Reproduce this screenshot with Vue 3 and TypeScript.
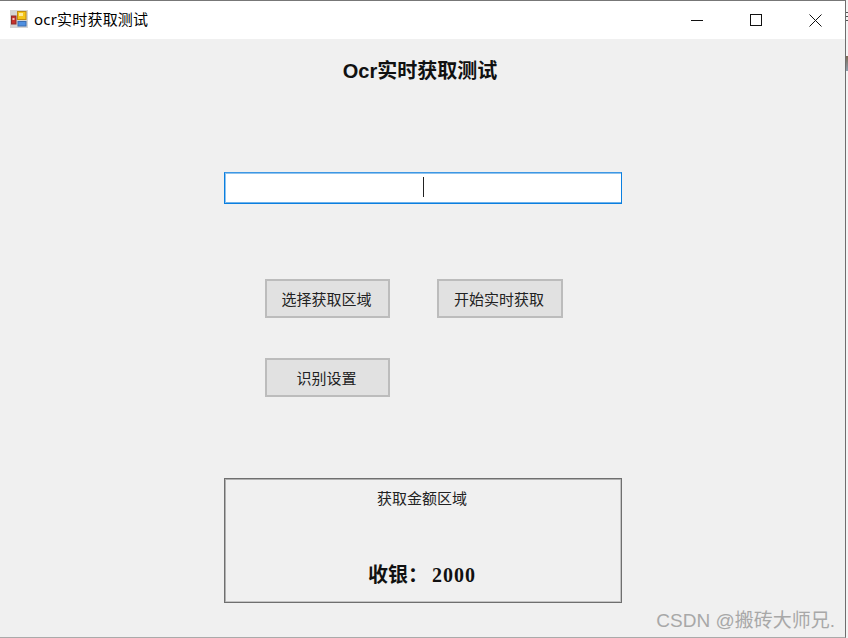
<template>
  <div class="desktop">
    <div class="window">
      <header class="titlebar">
        <svg class="app-icon" width="18" height="18" viewBox="0 0 18 18">
          <rect x="0" y="0" width="18" height="18" fill="#d4d4d4" />
          <rect x="7.5" y="1.5" width="8.5" height="8" fill="#f5c518" stroke="#c08a10" stroke-width="1" />
          <rect x="9" y="3" width="4" height="3" fill="#fdeb9a" />
          <rect x="1.5" y="6" width="4.5" height="8" fill="#c8322c" stroke="#8e2a28" stroke-width="1" />
          <rect x="2.5" y="8" width="2" height="2" fill="#f3c0b8" />
          <rect x="8" y="11.5" width="8" height="4.5" fill="#4f8fe0" stroke="#3a6cb0" stroke-width="1" />
        </svg>
        <span class="window-title">ocr实时获取测试</span>
        <div class="controls">
          <button class="control" aria-label="最小化">
            <svg width="12" height="12" viewBox="0 0 12 12"><path d="M0 6.5H12" stroke="#111" fill="none" /></svg>
          </button>
          <button class="control" aria-label="最大化">
            <svg width="12" height="12" viewBox="0 0 12 12"><rect x="0.5" y="0.5" width="11" height="11" stroke="#111" fill="none" /></svg>
          </button>
          <button class="control" aria-label="关闭">
            <svg width="13" height="13" viewBox="0 0 13 13"><path d="M0.5 0.5L12.5 12.5M12.5 0.5L0.5 12.5" stroke="#111" fill="none" /></svg>
          </button>
        </div>
      </header>

      <main class="form">
        <h1 class="heading">Ocr实时获取测试</h1>

        <div class="ocr-input">
          <span class="caret"></span>
        </div>

        <div class="actions">
          <button v-for="a in actions" :key="a" class="btn">{{ a }}</button>
        </div>

        <section class="result">
          <div class="result-title">获取金额区域</div>
          <div class="result-value">收银：<span class="amount">2000</span></div>
        </section>

        <div class="watermark">CSDN @搬砖大师兄.</div>
      </main>
    </div>
    <div class="edge"></div>
  </div>
</template>

<script setup lang="ts">
const actions: string[] = ["选择获取区域", "开始实时获取", "识别设置"];
</script>

<style>
html,
body {
  margin: 0;
  background: #fff;
}
</style>

<style scoped>
.desktop {
  width: 848px;
  height: 638px;
  display: flex;
  overflow: hidden;
}

.edge {
  flex: 1;
  background:
    linear-gradient(#555, #555) 0 12px / 100% 1px no-repeat,
    linear-gradient(#555, #555) 0 16px / 100% 1px no-repeat,
    linear-gradient(#555, #555) 0 20px / 100% 1px no-repeat,
    linear-gradient(#7b6a55, #8fa0b0) 0 56px / 100% 15px no-repeat,
    #f4f4f4;
}

.window {
  width: 846px;
  height: 638px;
  flex: none;
  box-sizing: border-box;
  border-right: 1px solid #6e6e6e;
  border-bottom: 1px solid #aaa;
  border-top: 1px solid #777;
  display: flex;
  flex-direction: column;
  font-family: "Noto Sans CJK SC", "Liberation Sans", sans-serif;
  color: #111;
}

.titlebar {
  height: 38px;
  flex: none;
  background: #fff;
  display: flex;
  align-items: center;
  padding-left: 10px;
}

.app-icon {
  margin-right: 6px;
  margin-top: -2px;
}

.window-title {
  font-size: 15px;
  line-height: 20px;
  margin-top: -2px;
  letter-spacing: 0.2px;
  color: #000;
  font-family: "Noto Sans", "Noto Sans CJK SC", sans-serif;
}

.controls {
  margin-left: auto;
  display: flex;
  height: 100%;
}

.control {
  width: 59px;
  border: 0;
  background: transparent;
  padding: 0;
  display: flex;
  align-items: center;
  justify-content: center;
}

.control:not(:last-child) svg {
  margin-right: 2px;
}

.form {
  position: relative;
  flex: 1;
  background: #f0f0f0;
  padding-left: 224px;
}

.heading {
  width: 392px;
  margin: 0;
  padding-top: 18px;
  height: 29px;
  font-size: 20px;
  line-height: 29px;
  font-weight: 700;
  text-align: center;
  font-family: "Liberation Sans", "Noto Sans CJK SC", sans-serif;
}

.ocr-input {
  width: 398px;
  height: 32px;
  box-sizing: border-box;
  margin-top: 86px;
  background: #fff;
  border: 1px solid #0a7fe0;
  border-top-color: #3d97e4;
  box-shadow: inset 1px 1px 0 #8fc3ee, inset 0 -1px 0 #6fb2ea;
  display: flex;
  align-items: center;
  padding-left: 198px;
}

.caret {
  width: 1px;
  height: 20px;
  margin-top: -3px;
  background: #222;
}

.actions {
  width: 298px;
  margin: 75px 0 0 41px;
  display: grid;
  grid-template-columns: 125px 126px;
  column-gap: 47px;
  row-gap: 40px;
}

.btn {
  height: 39px;
  box-sizing: border-box;
  padding: 0 2px 0 0;
  background: #e1e1e1;
  border: 2px solid #bcbcbc;
  font-size: 15px;
  font-family: inherit;
  color: #222;
}

.result {
  width: 398px;
  height: 125px;
  box-sizing: border-box;
  margin-top: 81px;
  border: 1px solid #6f6f6f;
  box-shadow: inset 1px 1px 0 #b0b0b0, inset -1px -1px 0 #c4c4c4;
  text-align: center;
  padding: 9px 2px 0 0;
}

.result-title {
  font-size: 15px;
  line-height: 20px;
  color: #222;
}

.result-value {
  margin-top: 51px;
  font-size: 20px;
  line-height: 30px;
  font-weight: 700;
  color: #111;
}

.amount {
  padding-left: 4px;
  font-size: 20px;
  letter-spacing: 1px;
  font-family: "Liberation Serif", serif;
}

.watermark {
  position: absolute;
  right: 10px;
  bottom: 4px;
  font-size: 19px;
  line-height: 24px;
  color: #a8a8a8;
  font-family: "Liberation Sans", "Noto Sans CJK SC", sans-serif;
}
</style>
